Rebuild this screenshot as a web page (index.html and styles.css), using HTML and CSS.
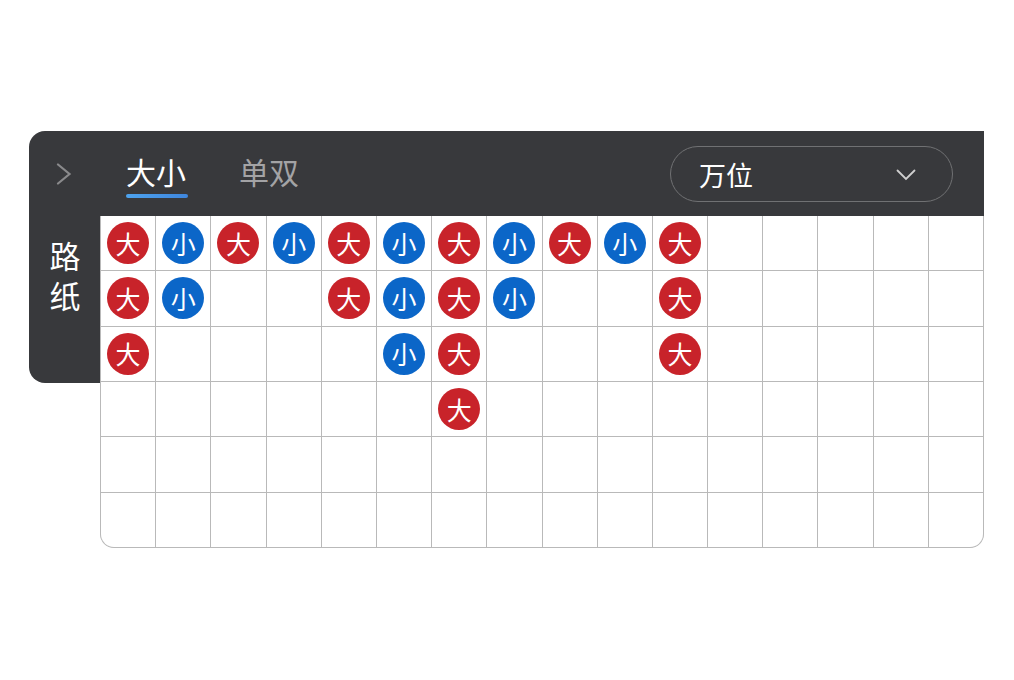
FILE: index.html
```html
<!DOCTYPE html>
<html lang="zh">
<head>
<meta charset="utf-8">
<title>路纸</title>
<link rel="stylesheet" href="styles.css">
</head>
<body>
<div class="panel">
  <div class="header">
    <div class="expand">
      <svg width="16" height="22" viewBox="0 0 16 22"><path d="M2 1.5 L13.5 11 L2 20.5" fill="none" stroke="#8a8a8c" stroke-width="2.2" stroke-linecap="round"/></svg>
    </div>
    <div class="tabs">
      <div class="tab active">大小</div>
      <div class="tab">单双</div>
    </div>
    <div class="select">
      <span class="select-label">万位</span>
      <svg width="20" height="12" viewBox="0 0 20 12"><path d="M1.5 1.5 L10 10 L18.5 1.5" fill="none" stroke="#cfcfcf" stroke-width="1.8" stroke-linecap="round"/></svg>
    </div>
  </div>
  <div class="body">
    <div class="side"><span class="side-label">路纸</span></div>
    <div class="grid">
      <div class="cell"><span class="dot big">大</span></div>
      <div class="cell"><span class="dot small">小</span></div>
      <div class="cell"><span class="dot big">大</span></div>
      <div class="cell"><span class="dot small">小</span></div>
      <div class="cell"><span class="dot big">大</span></div>
      <div class="cell"><span class="dot small">小</span></div>
      <div class="cell"><span class="dot big">大</span></div>
      <div class="cell"><span class="dot small">小</span></div>
      <div class="cell"><span class="dot big">大</span></div>
      <div class="cell"><span class="dot small">小</span></div>
      <div class="cell"><span class="dot big">大</span></div>
      <div class="cell"></div><div class="cell"></div><div class="cell"></div><div class="cell"></div><div class="cell"></div>

      <div class="cell"><span class="dot big">大</span></div>
      <div class="cell"><span class="dot small">小</span></div>
      <div class="cell"></div>
      <div class="cell"></div>
      <div class="cell"><span class="dot big">大</span></div>
      <div class="cell"><span class="dot small">小</span></div>
      <div class="cell"><span class="dot big">大</span></div>
      <div class="cell"><span class="dot small">小</span></div>
      <div class="cell"></div>
      <div class="cell"></div>
      <div class="cell"><span class="dot big">大</span></div>
      <div class="cell"></div><div class="cell"></div><div class="cell"></div><div class="cell"></div><div class="cell"></div>

      <div class="cell"><span class="dot big">大</span></div>
      <div class="cell"></div>
      <div class="cell"></div>
      <div class="cell"></div>
      <div class="cell"></div>
      <div class="cell"><span class="dot small">小</span></div>
      <div class="cell"><span class="dot big">大</span></div>
      <div class="cell"></div>
      <div class="cell"></div>
      <div class="cell"></div>
      <div class="cell"><span class="dot big">大</span></div>
      <div class="cell"></div><div class="cell"></div><div class="cell"></div><div class="cell"></div><div class="cell"></div>

      <div class="cell"></div><div class="cell"></div><div class="cell"></div><div class="cell"></div><div class="cell"></div><div class="cell"></div>
      <div class="cell"><span class="dot big">大</span></div>
      <div class="cell"></div><div class="cell"></div><div class="cell"></div><div class="cell"></div><div class="cell"></div><div class="cell"></div><div class="cell"></div><div class="cell"></div><div class="cell"></div>

      <div class="cell"></div><div class="cell"></div><div class="cell"></div><div class="cell"></div><div class="cell"></div><div class="cell"></div><div class="cell"></div><div class="cell"></div>
      <div class="cell"></div><div class="cell"></div><div class="cell"></div><div class="cell"></div><div class="cell"></div><div class="cell"></div><div class="cell"></div><div class="cell"></div>

      <div class="cell"></div><div class="cell"></div><div class="cell"></div><div class="cell"></div><div class="cell"></div><div class="cell"></div><div class="cell"></div><div class="cell"></div>
      <div class="cell"></div><div class="cell"></div><div class="cell"></div><div class="cell"></div><div class="cell"></div><div class="cell"></div><div class="cell"></div><div class="cell"></div>
    </div>
  </div>
</div>
</body>
</html>
```

FILE: styles.css
```css
* { box-sizing: border-box; }

html, body {
  margin: 0;
  padding: 0;
  background: #ffffff;
  font-family: "Noto Sans CJK SC", "Noto Sans", sans-serif;
}

.panel {
  width: 955px;
  margin: 131px 0 0 29px;
}

.header {
  height: 85px;
  background: #38393c;
  border-top-left-radius: 16px;
  display: flex;
  align-items: center;
  padding-left: 27px;
}

.expand {
  width: 16px;
  height: 22px;
  display: flex;
  margin-top: 1px;
}

.tabs {
  display: flex;
  gap: 53px;
  margin-left: 54px;
  margin-top: 4px;
}

.tab {
  font-size: 30px;
  line-height: 40px;
  color: #a3a3a5;
  padding-bottom: 10px;
  position: relative;
}

.tab.active {
  color: #ffffff;
}

.tab.active::after {
  content: "";
  position: absolute;
  left: 0;
  right: -2px;
  bottom: 3px;
  height: 4px;
  border-radius: 2px;
  background: linear-gradient(90deg, #4da3ee, #3f86dd);
}

.select {
  margin-left: auto;
  margin-right: 31px;
  width: 283px;
  height: 56px;
  border: 1.5px solid #707173;
  border-radius: 28px;
  display: flex;
  align-items: center;
  justify-content: space-between;
  padding: 0 36px 0 28px;
}

.select-label {
  color: #ffffff;
  font-size: 27px;
  line-height: 36px;
  margin-top: 2px;
}

.select svg {
  margin-top: 2px;
}

.body {
  display: flex;
  align-items: flex-start;
}

.side {
  width: 71px;
  height: 167px;
  background: #38393c;
  border-bottom-left-radius: 16px;
  display: flex;
  justify-content: center;
  padding-top: 25px;
}

.side-label {
  writing-mode: vertical-rl;
  text-orientation: upright;
  color: #ffffff;
  font-size: 31px;
  line-height: 40px;
  letter-spacing: 9px;
}

.grid {
  width: 884px;
  height: 332px;
  display: grid;
  grid-template-columns: repeat(16, 1fr);
  grid-template-rows: repeat(6, 1fr);
  gap: 1px;
  background: #b9b9b9;
  border: 1px solid #b9b9b9;
  border-top: none;
  border-radius: 0 0 14px 14px;
  overflow: hidden;
}

.cell {
  background: #ffffff;
  display: flex;
  align-items: center;
  justify-content: center;
}

.dot {
  width: 42px;
  height: 42px;
  border-radius: 50%;
  display: flex;
  align-items: center;
  justify-content: center;
  color: #ffffff;
  font-size: 25px;
  line-height: 1;
}

.dot.big { background: #c8232a; }
.dot.small { background: #0b66c8; }
```
